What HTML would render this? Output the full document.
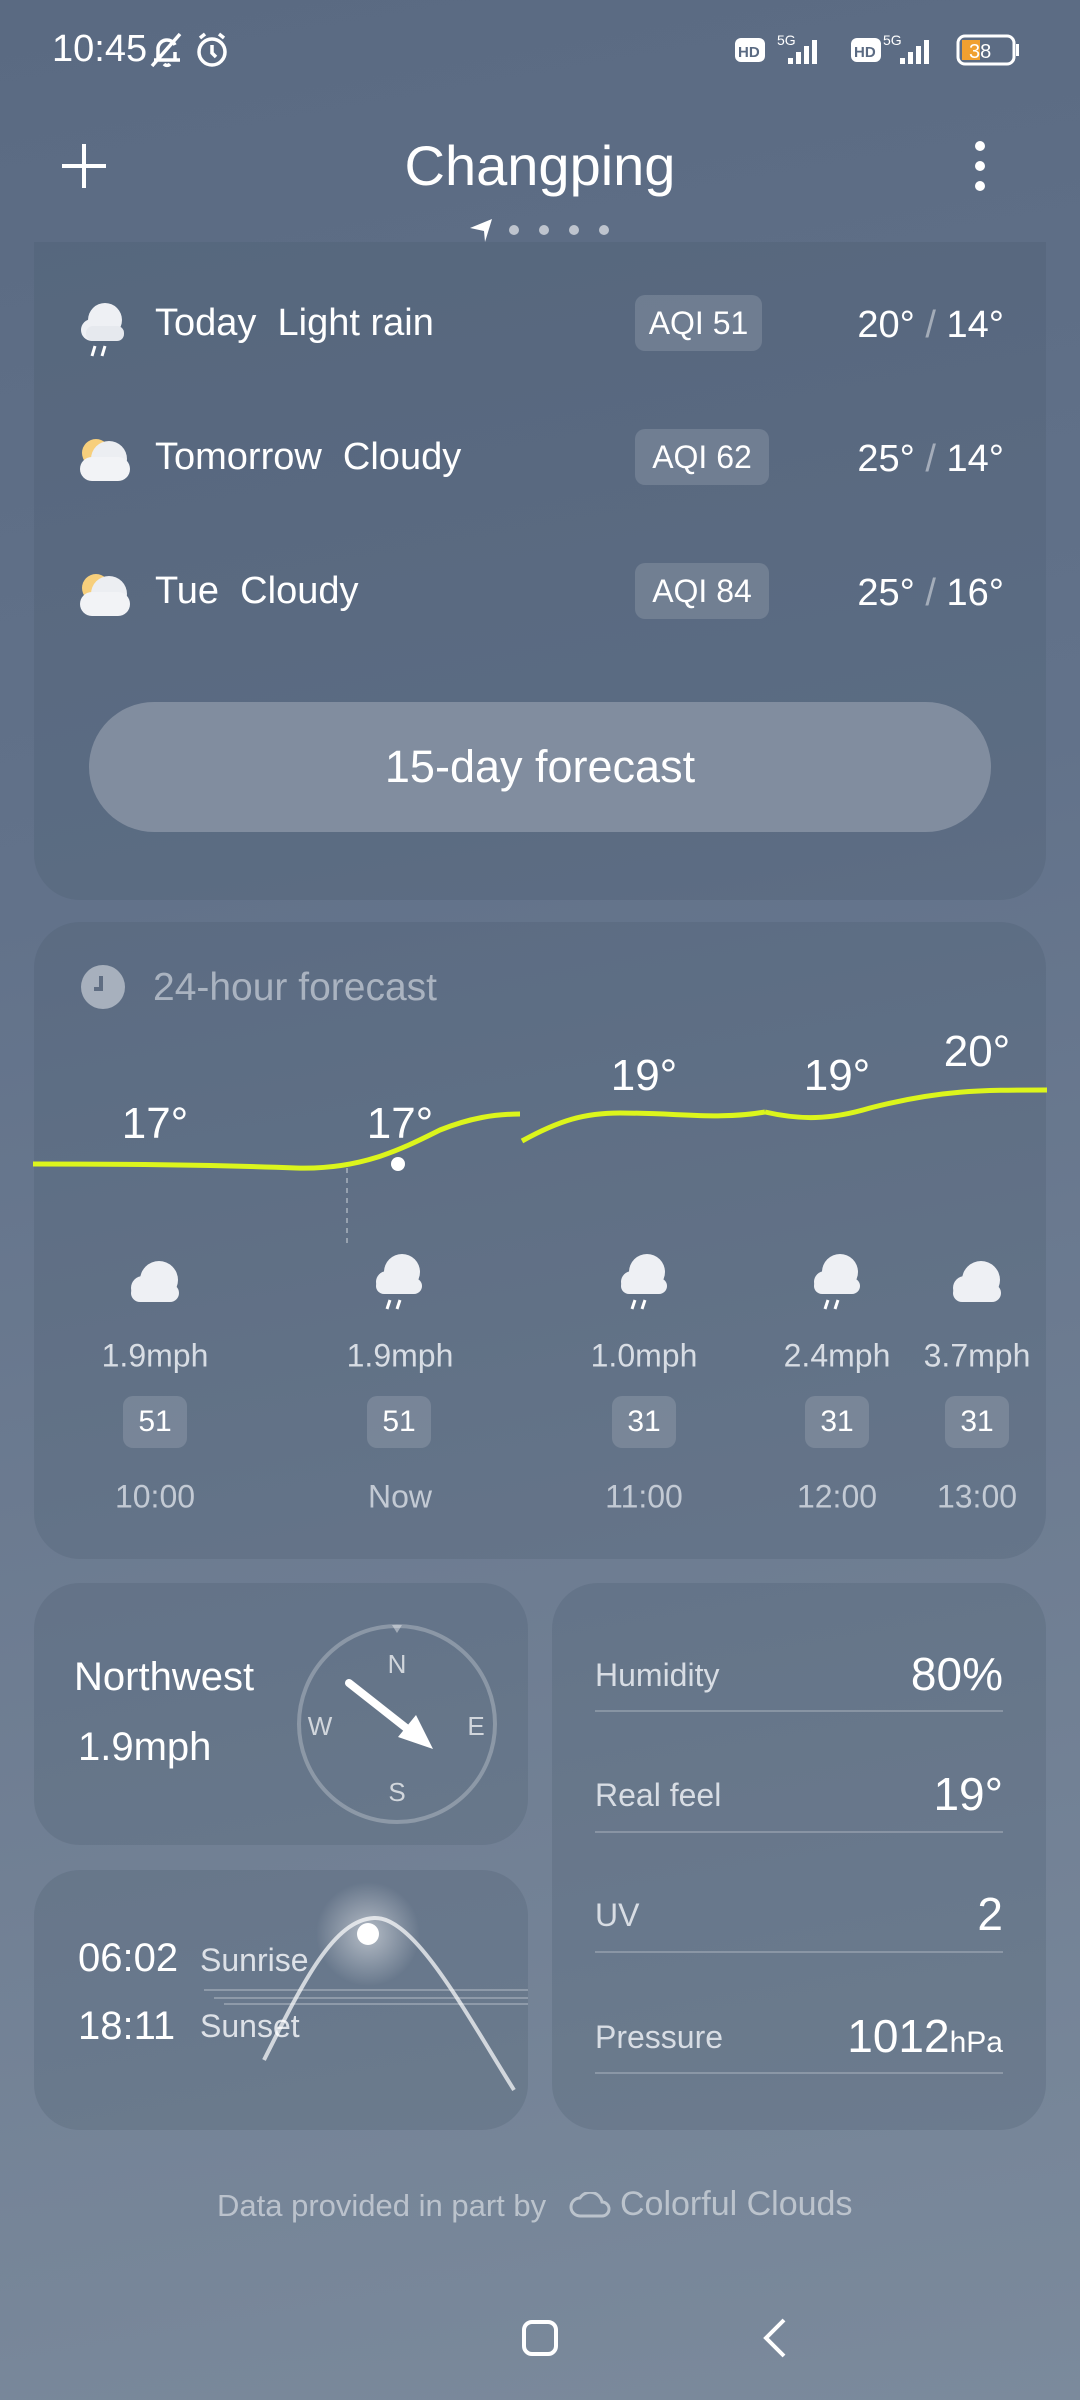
<!DOCTYPE html>
<html><head><meta charset="utf-8"><style>
*{margin:0;padding:0;box-sizing:border-box}
body{width:1080px;height:2400px;overflow:hidden;font-family:"Liberation Sans",sans-serif;color:#fff;background:linear-gradient(170deg,#5a6a82 0%,#62728a 35%,#6e7d92 65%,#7b8a9c 100%);position:relative}
.a{position:absolute;white-space:nowrap}
.card{position:absolute;background:rgba(70,85,105,0.22);border-radius:46px}
.c{transform:translateX(-50%)}
.m{transform:translate(-50%,-50%)}
.aqi{position:absolute;background:rgba(255,255,255,0.14);border-radius:10px;text-align:center}
.line{position:absolute;height:2px;background:rgba(255,255,255,0.22)}
</style></head><body>
<!-- status bar -->
<div class="a" style="left:52px;top:28px;font-size:38px">10:45</div>
<svg class="a" style="left:148px;top:30px" width="90" height="40" viewBox="0 0 90 40" fill="none" stroke="#fff" stroke-width="3.5"><path d="M6 30h26M10 30V18a9 9 0 0 1 17-3M27 22v8M4 36L32 4M16 34a4 4 0 0 0 6 0"/><circle cx="64" cy="22" r="13"/><path d="M64 15v8l4 4M52 8l5-4M76 8l-5-4"/></svg>
<svg class="a" style="left:733px;top:30px" width="290" height="40" viewBox="0 0 290 40" fill="#fff"><rect x="2" y="8" width="30" height="24" rx="6"/><text x="5" y="27" font-size="15" font-weight="bold" fill="#5a6a82" font-family="Liberation Sans">HD</text><text x="44" y="15" font-size="14" font-family="Liberation Sans">5G</text><rect x="55" y="28" width="5" height="6"/><rect x="63" y="22" width="5" height="12"/><rect x="71" y="16" width="5" height="18"/><rect x="79" y="10" width="5" height="24"/><rect x="118" y="8" width="30" height="24" rx="6"/><text x="121" y="27" font-size="15" font-weight="bold" fill="#5a6a82" font-family="Liberation Sans">HD</text><text x="150" y="15" font-size="14" font-family="Liberation Sans">5G</text><rect x="167" y="28" width="5" height="6"/><rect x="175" y="22" width="5" height="12"/><rect x="183" y="16" width="5" height="18"/><rect x="191" y="10" width="5" height="24"/><rect x="225" y="6" width="56" height="28" rx="7" fill="none" stroke="#fff" stroke-width="3"/><rect x="229" y="10" width="18" height="20" fill="#f0a030"/><rect x="283" y="14" width="3" height="12"/><text x="236" y="28" font-size="20" font-family="Liberation Sans">38</text></svg>
<!-- header -->
<svg class="a" style="left:60px;top:142px" width="48" height="48"><path d="M24 2v44M2 24h44" stroke="#fff" stroke-width="4"/></svg>
<div class="a c" style="left:540px;top:133px;font-size:56px">Changping</div>
<svg class="a" style="left:970px;top:140px" width="20" height="52" fill="#fff"><circle cx="10" cy="6" r="5"/><circle cx="10" cy="26" r="5"/><circle cx="10" cy="46" r="5"/></svg>
<svg class="a" style="left:468px;top:216px" width="146" height="28" fill="rgba(255,255,255,0.6)"><path d="M2 12L24 3 17 26 16 15z" fill="#fff"/><circle cx="46" cy="14" r="5"/><circle cx="76" cy="14" r="5"/><circle cx="106" cy="14" r="5"/><circle cx="136" cy="14" r="5"/></svg>
<!-- card 1 -->
<div class="card" style="left:34px;top:242px;width:1012px;height:658px;border-radius:0 0 46px 46px"></div>
<svg class="a" style="left:78px;top:298px" width="54" height="62"><circle cx="27" cy="22" r="17" fill="#eef0f4"/><circle cx="14" cy="32" r="11" fill="#eef0f4"/><rect x="8" y="28" width="38" height="15" rx="7" fill="#e6e9ee"/><path d="M17 48l-3 10M27 48l-3 10" stroke="#fff" stroke-width="3"/></svg>
<svg class="a" style="left:78px;top:435px" width="56" height="48"><circle cx="18" cy="18" r="14" fill="#f7cf7c"/><circle cx="31" cy="24" r="18" fill="#eceef2"/><rect x="2" y="22" width="50" height="24" rx="12" fill="#f2f3f6"/></svg>
<svg class="a" style="left:78px;top:570px" width="56" height="48"><circle cx="18" cy="18" r="14" fill="#f7cf7c"/><circle cx="31" cy="24" r="18" fill="#eceef2"/><rect x="2" y="22" width="50" height="24" rx="12" fill="#f2f3f6"/></svg>
<div class="a" style="left:155px;top:302px;font-size:38px">Today&nbsp; Light rain</div>
<div class="a" style="left:155px;top:436px;font-size:38px">Tomorrow&nbsp; Cloudy</div>
<div class="a" style="left:155px;top:570px;font-size:38px">Tue&nbsp; Cloudy</div>
<div class="aqi" style="left:635px;top:295px;width:127px;height:56px;font-size:32px;line-height:56px">AQI 51</div>
<div class="aqi" style="left:635px;top:429px;width:134px;height:56px;font-size:32px;line-height:56px">AQI 62</div>
<div class="aqi" style="left:635px;top:563px;width:134px;height:56px;font-size:32px;line-height:56px">AQI 84</div>
<div class="a" style="right:76px;top:304px;font-size:38px">20° <span style="color:rgba(255,255,255,.45)">/</span> 14°</div>
<div class="a" style="right:76px;top:438px;font-size:38px">25° <span style="color:rgba(255,255,255,.45)">/</span> 14°</div>
<div class="a" style="right:76px;top:572px;font-size:38px">25° <span style="color:rgba(255,255,255,.45)">/</span> 16°</div>
<div class="a" style="left:89px;top:702px;width:902px;height:130px;border-radius:65px;background:#818d9f;text-align:center;line-height:130px;font-size:45px">15-day forecast</div>
<!-- card 2 -->
<div class="card" style="left:34px;top:922px;width:1012px;height:637px"></div>
<svg class="a" style="left:80px;top:964px" width="46" height="46"><circle cx="23" cy="23" r="22" fill="#a7b0bd"/><path d="M21 12v13h-7" stroke="#5f6d82" stroke-width="4" fill="none"/></svg>
<div class="a" style="left:153px;top:966px;font-size:39px;color:#aab3c0">24-hour forecast</div>
<svg class="a" style="left:0;top:1040px" width="1080" height="220" viewBox="0 1040 1080 220" fill="none">
<path d="M33 1164C120 1164 220 1165 296 1168C360 1170 400 1150 440 1130C470 1118 495 1114 520 1114" stroke="#dcf51c" stroke-width="5"/>
<path d="M522 1141C560 1120 585 1113 620 1113C680 1113 720 1120 765 1112" stroke="#dcf51c" stroke-width="5"/>
<path d="M765 1112C800 1120 830 1120 870 1108C940 1090 980 1090 1047 1090" stroke="#dcf51c" stroke-width="5"/>
<circle cx="398" cy="1164" r="7" fill="#fff"/>
<path d="M347 1168V1246" stroke="rgba(255,255,255,.35)" stroke-width="2" stroke-dasharray="5 5"/>
</svg>
<div class="a m" style="left:155px;top:1124px;font-size:44px">17°</div>
<div class="a m" style="left:400px;top:1124px;font-size:44px">17°</div>
<div class="a m" style="left:644px;top:1076px;font-size:44px">19°</div>
<div class="a m" style="left:837px;top:1076px;font-size:44px">19°</div>
<div class="a m" style="left:977px;top:1052px;font-size:44px">20°</div>
<svg class="a" style="left:127px;top:1258px" width="56" height="46"><circle cx="32" cy="22" r="19" fill="#eef0f4"/><circle cx="16" cy="30" r="12" fill="#eef0f4"/><rect x="4" y="26" width="48" height="18" rx="9" fill="#eef0f4"/></svg>
<svg class="a" style="left:372px;top:1252px" width="56" height="62"><circle cx="30" cy="20" r="18" fill="#eef0f4"/><circle cx="15" cy="30" r="11" fill="#eef0f4"/><rect x="4" y="26" width="46" height="16" rx="8" fill="#eef0f4"/><path d="M18 48l-3 9M28 48l-3 9" stroke="#fff" stroke-width="3"/></svg>
<svg class="a" style="left:617px;top:1252px" width="56" height="62"><circle cx="30" cy="20" r="18" fill="#eef0f4"/><circle cx="15" cy="30" r="11" fill="#eef0f4"/><rect x="4" y="26" width="46" height="16" rx="8" fill="#eef0f4"/><path d="M18 48l-3 9M28 48l-3 9" stroke="#fff" stroke-width="3"/></svg>
<svg class="a" style="left:810px;top:1252px" width="56" height="62"><circle cx="30" cy="20" r="18" fill="#eef0f4"/><circle cx="15" cy="30" r="11" fill="#eef0f4"/><rect x="4" y="26" width="46" height="16" rx="8" fill="#eef0f4"/><path d="M18 48l-3 9M28 48l-3 9" stroke="#fff" stroke-width="3"/></svg>
<svg class="a" style="left:949px;top:1258px" width="56" height="46"><circle cx="32" cy="22" r="19" fill="#eef0f4"/><circle cx="16" cy="30" r="12" fill="#eef0f4"/><rect x="4" y="26" width="48" height="18" rx="9" fill="#eef0f4"/></svg>
<div class="a m" style="left:155px;top:1356px;font-size:32px;color:#d8dde4">1.9mph</div>
<div class="a m" style="left:400px;top:1356px;font-size:32px;color:#d8dde4">1.9mph</div>
<div class="a m" style="left:644px;top:1356px;font-size:32px;color:#d8dde4">1.0mph</div>
<div class="a m" style="left:837px;top:1356px;font-size:32px;color:#d8dde4">2.4mph</div>
<div class="a m" style="left:977px;top:1356px;font-size:32px;color:#d8dde4">3.7mph</div>
<div class="aqi" style="left:123px;top:1396px;width:64px;height:52px;line-height:52px;font-size:30px">51</div>
<div class="aqi" style="left:367px;top:1396px;width:64px;height:52px;line-height:52px;font-size:30px">51</div>
<div class="aqi" style="left:612px;top:1396px;width:64px;height:52px;line-height:52px;font-size:30px">31</div>
<div class="aqi" style="left:805px;top:1396px;width:64px;height:52px;line-height:52px;font-size:30px">31</div>
<div class="aqi" style="left:945px;top:1396px;width:64px;height:52px;line-height:52px;font-size:30px">31</div>
<div class="a m" style="left:155px;top:1497px;font-size:32px;color:#c3cad4">10:00</div>
<div class="a m" style="left:400px;top:1497px;font-size:32px;color:#c3cad4">Now</div>
<div class="a m" style="left:644px;top:1497px;font-size:32px;color:#c3cad4">11:00</div>
<div class="a m" style="left:837px;top:1497px;font-size:32px;color:#c3cad4">12:00</div>
<div class="a m" style="left:977px;top:1497px;font-size:32px;color:#c3cad4">13:00</div>
<!-- wind card -->
<div class="card" style="left:34px;top:1583px;width:494px;height:262px;overflow:hidden">
<div class="a" style="left:40px;top:72px;font-size:40px">Northwest</div>
<div class="a" style="left:44px;top:142px;font-size:40px">1.9mph</div>
<svg class="a" style="left:258px;top:36px" width="210" height="210" viewBox="0 0 210 210"><circle cx="105" cy="105" r="98" fill="none" stroke="rgba(255,255,255,.25)" stroke-width="4"/><path d="M100 6h10l-5 8z" fill="rgba(255,255,255,.4)"/><g fill="rgba(255,255,255,.7)" font-family="Liberation Sans" font-size="26" text-anchor="middle"><text x="105" y="54">N</text><text x="105" y="182">S</text><text x="28" y="116">W</text><text x="184" y="116">E</text></g><path d="M57 64L118 112" stroke="#fff" stroke-width="8" stroke-linecap="round"/><path d="M141 130L106 118 124 96z" fill="#fff"/></svg>
</div>
<!-- sun card -->
<div class="card" style="left:34px;top:1870px;width:494px;height:260px;overflow:hidden">
<div class="a" style="left:44px;top:66px;font-size:40px">06:02</div>
<div class="a" style="left:166px;top:72px;font-size:32px;color:#dde1e7">Sunrise</div>
<div class="a" style="left:44px;top:134px;font-size:40px">18:11</div>
<div class="a" style="left:166px;top:138px;font-size:32px;color:#dde1e7">Sunset</div>
<svg class="a" style="left:0;top:0" width="494" height="260"><defs><radialGradient id="g"><stop offset="0" stop-color="rgba(255,255,255,.5)"/><stop offset="1" stop-color="rgba(255,255,255,0)"/></radialGradient></defs><circle cx="334" cy="64" r="52" fill="url(#g)"/><path d="M230 190C270 110 300 50 340 48C380 46 430 140 480 220" fill="none" stroke="rgba(255,255,255,.7)" stroke-width="4"/><path d="M170 120H494M180 128H494M190 134H494" stroke="rgba(255,255,255,.25)" stroke-width="2"/><circle cx="334" cy="64" r="11" fill="#fff"/></svg>
</div>
<!-- details card -->
<div class="card" style="left:552px;top:1583px;width:494px;height:547px">
<div class="a" style="left:43px;top:74px;font-size:32px;color:#d8dde4">Humidity</div>
<div class="a" style="right:43px;top:64px;font-size:46px">80%</div>
<div class="line" style="left:43px;right:43px;top:127px"></div>
<div class="a" style="left:43px;top:194px;font-size:32px;color:#d8dde4">Real feel</div>
<div class="a" style="right:43px;top:184px;font-size:46px">19°</div>
<div class="line" style="left:43px;right:43px;top:248px"></div>
<div class="a" style="left:43px;top:314px;font-size:32px;color:#d8dde4">UV</div>
<div class="a" style="right:43px;top:304px;font-size:46px">2</div>
<div class="line" style="left:43px;right:43px;top:368px"></div>
<div class="a" style="left:43px;top:436px;font-size:32px;color:#d8dde4">Pressure</div>
<div class="a" style="right:43px;top:426px;font-size:46px">1012<span style="font-size:30px">hPa</span></div>
<div class="line" style="left:43px;right:43px;top:489px"></div>
</div>
<!-- footer -->
<div class="a" style="left:217px;top:2188px;font-size:31px;color:rgba(255,255,255,.5)">Data provided in part by</div>
<svg class="a" style="left:568px;top:2192px" width="44" height="28" fill="none" stroke="rgba(255,255,255,.5)" stroke-width="3"><path d="M12 24a9 9 0 0 1 0-18 12 12 0 0 1 22 4 7 7 0 0 1 0 14z"/></svg>
<div class="a" style="left:620px;top:2185px;font-size:34px;color:rgba(255,255,255,.5)">Colorful Clouds</div>
<svg class="a" style="left:520px;top:2318px" width="40" height="40"><rect x="4" y="4" width="32" height="32" rx="8" fill="none" stroke="#fff" stroke-width="4"/></svg>
<svg class="a" style="left:758px;top:2316px" width="32" height="44"><path d="M26 4L8 22l18 18" fill="none" stroke="#fff" stroke-width="4"/></svg>
</body></html>
